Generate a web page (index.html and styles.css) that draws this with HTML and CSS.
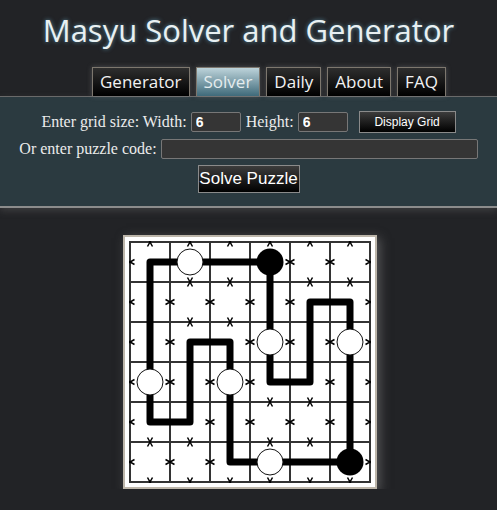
FILE: index.html
```html
<!DOCTYPE html>
<html lang="en">
<head>
<meta charset="utf-8">
<title>Masyu Solver and Generator</title>
<link rel="stylesheet" href="styles.css">
</head>
<body>
<header class="top">
  <h1 class="title">Masyu Solver and Generator</h1>
  <nav class="tabs">
    <a class="tab">Generator</a>
    <a class="tab tab-active">Solver</a>
    <a class="tab">Daily</a>
    <a class="tab">About</a>
    <a class="tab">FAQ</a>
  </nav>
</header>
<section class="panel">
  <div class="row">
    <span class="lbl">Enter grid size: Width:</span>
    <input class="field field-small" type="text" value="6">
    <span class="lbl">Height:</span>
    <input class="field field-small" type="text" value="6">
    <button class="btn btn-small">Display Grid</button>
  </div>
  <div class="row">
    <span class="lbl">Or enter puzzle code:</span>
    <input class="field field-code" type="text" value="">
  </div>
  <div class="row">
    <button class="btn btn-big">Solve Puzzle</button>
  </div>
</section>
<main class="stage">
  <div class="board">
    <svg class="grid" width="242" height="242" viewBox="0 0 242 242">
      <defs>
        <path id="xh" d="M-2.5 -4.5 L2.5 4.5 M2.5 -4.5 L-2.5 4.5" stroke="#000" stroke-width="1.5" fill="none"/>
        <path id="xv" d="M-4.5 -2.5 L4.5 2.5 M-4.5 2.5 L4.5 -2.5" stroke="#000" stroke-width="1.5" fill="none"/>
      </defs>
      <g stroke="#333" stroke-width="2">
        <path d="M1 0 V242 M41 0 V242 M81 0 V242 M121 0 V242 M161 0 V242 M201 0 V242 M241 0 V242"/>
        <path d="M0 1 H242 M0 41 H242 M0 81 H242 M0 121 H242 M0 161 H242 M0 201 H242 M0 241 H242"/>
      </g>
      <g>
        <use href="#xv" x="1" y="21"/><use href="#xv" x="161" y="21"/><use href="#xv" x="201" y="21"/><use href="#xv" x="241" y="21"/>
        <use href="#xv" x="1" y="61"/><use href="#xv" x="41" y="61"/><use href="#xv" x="81" y="61"/><use href="#xv" x="121" y="61"/><use href="#xv" x="161" y="61"/><use href="#xv" x="241" y="61"/>
        <use href="#xv" x="1" y="101"/><use href="#xv" x="41" y="101"/><use href="#xv" x="121" y="101"/><use href="#xv" x="161" y="101"/><use href="#xv" x="201" y="101"/><use href="#xv" x="241" y="101"/>
        <use href="#xv" x="1" y="141"/><use href="#xv" x="41" y="141"/><use href="#xv" x="81" y="141"/><use href="#xv" x="121" y="141"/><use href="#xv" x="201" y="141"/><use href="#xv" x="241" y="141"/>
        <use href="#xv" x="1" y="181"/><use href="#xv" x="81" y="181"/><use href="#xv" x="121" y="181"/><use href="#xv" x="161" y="181"/><use href="#xv" x="201" y="181"/><use href="#xv" x="241" y="181"/>
        <use href="#xv" x="1" y="221"/><use href="#xv" x="41" y="221"/><use href="#xv" x="81" y="221"/><use href="#xv" x="241" y="221"/>
        <use href="#xh" x="21" y="1"/><use href="#xh" x="61" y="1"/><use href="#xh" x="101" y="1"/><use href="#xh" x="141" y="1"/><use href="#xh" x="181" y="1"/><use href="#xh" x="221" y="1"/>
        <use href="#xh" x="61" y="41"/><use href="#xh" x="101" y="41"/><use href="#xh" x="181" y="41"/><use href="#xh" x="221" y="41"/>
        <use href="#xh" x="61" y="81"/><use href="#xh" x="101" y="81"/>
        <use href="#xh" x="141" y="161"/><use href="#xh" x="181" y="161"/>
        <use href="#xh" x="21" y="201"/><use href="#xh" x="61" y="201"/><use href="#xh" x="141" y="201"/><use href="#xh" x="181" y="201"/>
        <use href="#xh" x="21" y="241"/><use href="#xh" x="61" y="241"/><use href="#xh" x="101" y="241"/><use href="#xh" x="141" y="241"/><use href="#xh" x="181" y="241"/><use href="#xh" x="221" y="241"/>
      </g>
      <path d="M21 21 H141 V141 H181 V61 H221 V221 H101 V101 H61 V181 H21 Z" fill="none" stroke="#000" stroke-width="7" stroke-linejoin="round"/>
      <g fill="#fff" stroke="#111" stroke-width="1">
        <circle cx="61" cy="21" r="13"/>
        <circle cx="141" cy="101" r="13"/>
        <circle cx="221" cy="101" r="13"/>
        <circle cx="21" cy="141" r="13"/>
        <circle cx="101" cy="141" r="13"/>
        <circle cx="141" cy="221" r="13"/>
      </g>
      <g fill="#000">
        <circle cx="141" cy="21" r="13.5"/>
        <circle cx="221" cy="221" r="13.5"/>
      </g>
    </svg>
  </div>
</main>
</body>
</html>
```

FILE: styles.css
```css
html, body {
  margin: 0;
  padding: 0;
  background: #222326;
}

body {
  font-family: "Liberation Serif", "Times New Roman", serif;
  color: #e8e8e8;
}

.top {
  padding-top: 9px;
}

.title {
  margin: 0;
  text-align: center;
  font-family: "Open Sans", sans-serif;
  font-weight: normal;
  font-size: 31px;
  line-height: 42px;
  color: #e8f0f2;
  text-shadow: 0 0 4px rgba(110, 180, 210, 0.7);
}

.tabs {
  display: flex;
  gap: 6px;
  margin-top: 16px;
  padding-left: 92px;
}

.tab {
  display: block;
  height: 28px;
  line-height: 28px;
  padding: 0 7px;
  border: 1px solid #7d776e;
  border-bottom: none;
  background: linear-gradient(#2e2e2e, #000);
  font-family: "Open Sans", sans-serif;
  font-size: 17px;
  color: #f2f2f2;
  box-shadow: 0 0 5px rgba(160, 160, 160, 0.35);
}

.tab-active {
  background: linear-gradient(#bdd3da, #3f6a7a);
  color: #e4ecee;
}

.panel {
  border-top: 1px solid #6a6a6a;
  border-bottom: 2px solid #8c8c8c;
  background: #2b3a40;
  padding: 14px 0 13px;
  display: flex;
  flex-direction: column;
  align-items: center;
  gap: 6px;
  box-shadow: 0 3px 7px rgba(110, 110, 110, 0.35);
}

.row {
  display: flex;
  align-items: center;
  gap: 4px;
}

.lbl {
  font-size: 16px;
  color: #ececec;
  white-space: nowrap;
}

.field {
  box-sizing: border-box;
  height: 20px;
  margin: 0;
  padding: 0 4px;
  border: 1px solid #777;
  border-radius: 2px;
  background: #353535;
  color: #fff;
  font-family: "Liberation Sans", Arial, sans-serif;
  font-weight: bold;
  font-size: 14px;
}

.field-small {
  width: 50px;
}

.field-small + .lbl {
  margin-left: 1px;
}

.field-code {
  width: 317px;
}

.btn {
  box-sizing: border-box;
  margin: 0;
  padding: 0;
  border: 1px solid #8a8a8a;
  background: linear-gradient(#3c3c3c, #000);
  color: #fff;
  font-family: "Liberation Sans", Arial, sans-serif;
  white-space: nowrap;
}

.btn-small {
  width: 97px;
  height: 22px;
  font-size: 12px;
  margin-left: 7px;
}

.btn-big {
  width: 102px;
  height: 28px;
  font-size: 17px;
}

.stage {
  display: flex;
  justify-content: center;
  padding-top: 27px;
  padding-left: 3px;
}

.board {
  background: #fff;
  border: 2px solid #bdb6aa;
  padding: 4px;
  box-shadow: 3px 3px 10px rgba(120, 120, 120, 0.6);
  line-height: 0;
}

.grid {
  display: block;
}
```
